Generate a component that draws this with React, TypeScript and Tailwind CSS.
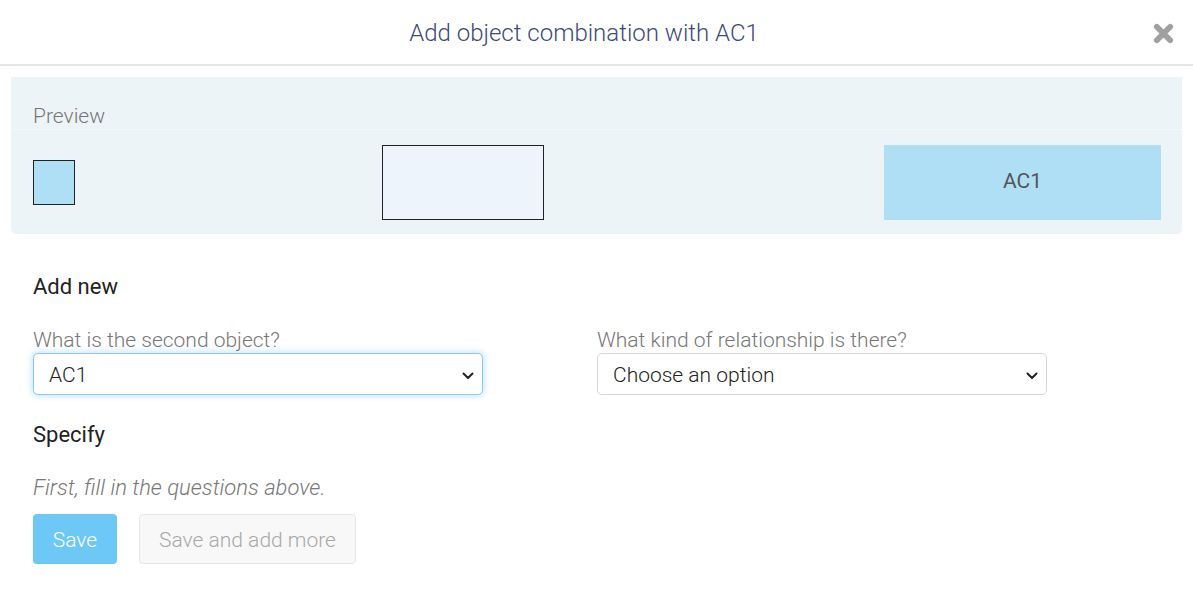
import React from "react";

function Chevron() {
  return (
    <svg width="14" height="14" viewBox="0 0 14 14" className="shrink-0">
      <path d="M2.5 4.5 L7 9 L11.5 4.5" fill="none" stroke="#222" strokeWidth="2" strokeLinecap="round" strokeLinejoin="round" />
    </svg>
  );
}

function SelectBox({ value, focused }: { value: string; focused?: boolean }) {
  return (
    <div
      className={
        focused
          ? "flex h-[42px] w-[450px] items-center justify-between rounded-[5px] border border-[#8ec9f2] bg-white pl-[15px] pr-[7px] pt-[3px] text-[21px] text-[#222] shadow-[0_0_6px_1px_rgba(110,190,245,0.45)]"
          : "flex h-[42px] w-[450px] items-center justify-between rounded-[5px] border border-[#d6d6d6] bg-white pl-[15px] pr-[7px] pt-[3px] text-[21px] text-[#222]"
      }
    >
      <span>{value}</span>
      <Chevron />
    </div>
  );
}

export default function App() {
  return (
    <div className="h-[591px] w-[1193px] bg-white font-['Roboto',sans-serif] font-light">
      <header className="relative flex h-[66px] items-center justify-center border-b-2 border-[#e6e6e6] pr-[25px] pt-[2px]">
        <h1 className="text-[24px] text-[#3e4a78]">Add object combination with AC1</h1>
        <button className="absolute right-[18px] top-[22px]">
          <svg width="23" height="23" viewBox="0 0 24 24">
            <path d="M5 5 L19 19 M19 5 L5 19" stroke="#a0a0a0" strokeWidth="6" strokeLinecap="round" />
          </svg>
        </button>
      </header>

      <section className="mx-[11px] mt-[11px]">
        <div className="flex h-[52px] items-end bg-[#ecf4f8] px-[22px] pb-[1px]">
          <span className="text-[21px] leading-[24px] text-[#777]">Preview</span>
        </div>
        <div className="flex h-[105px] items-center rounded-b-[5px] border-t border-[#f2f8fb] bg-[#ecf4f8] pl-[22px] pr-[21px]">
          <div className="h-[45px] w-[42px] border border-[#222] bg-[#aedff5]" />
          <div className="ml-[307px] h-[75px] w-[162px] border border-[#222] bg-[#edf4fb]" />
          <div className="ml-auto flex h-[75px] w-[277px] items-center justify-center bg-[#aedff5] text-[21px] font-normal text-[#555]">
            AC1
          </div>
        </div>
      </section>

      <div className="px-[33px]">
        <h2 className="mt-[42px] text-[22px] font-normal leading-none text-[#222]">Add new</h2>

        <div className="mt-[30px] flex gap-[114px]">
          <div>
            <div className="text-[21px] leading-[25px] text-[#777]">What is the second object?</div>
            <SelectBox value="AC1" focused />
          </div>
          <div>
            <div className="text-[21px] leading-[25px] text-[#777]">What kind of relationship is there?</div>
            <SelectBox value="Choose an option" />
          </div>
        </div>

        <h2 className="mt-[29px] text-[22px] font-normal leading-none text-[#222]">Specify</h2>

        <p className="mt-[31px] text-[22px] italic leading-none text-[#777]">First, fill in the questions above.</p>

        <div className="mt-[15px] flex gap-[22px]">
          <button className="h-[50px] w-[84px] rounded-[4px] bg-[#6ec8f5] pt-[3px] text-[21px] text-white">Save</button>
          <button className="h-[50px] w-[217px] rounded-[4px] border border-[#e6e6e6] bg-[#f8f8f8] pt-[3px] text-[21px] text-[#a8a8a8]">
            Save and add more
          </button>
        </div>
      </div>
    </div>
  );
}
